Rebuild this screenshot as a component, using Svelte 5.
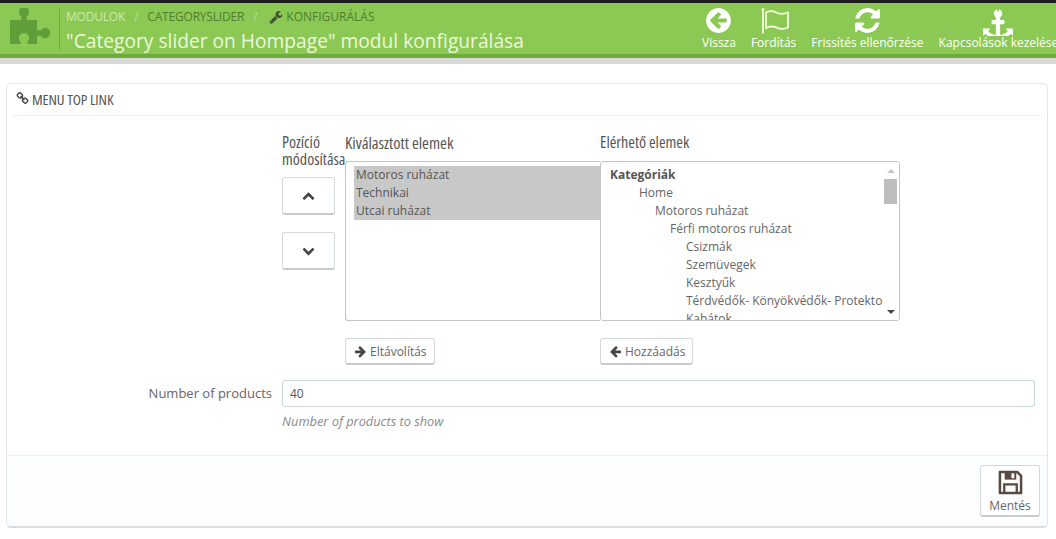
<script>
  const actions = [
    { label: 'Vissza', kind: 'back' },
    { label: 'Fordítás', kind: 'flag' },
    { label: 'Frissítés ellenőrzése', kind: 'refresh' },
    { label: 'Kapcsolások kezelése', kind: 'anchor' }
  ];
  const paths = {
    back: 'M1408 960v-128q0-26-19-45t-45-19h-502l189-189q19-19 19-45t-19-45l-91-91q-18-18-45-18t-45 18l-362 362-91 91q-18 18-18 45t18 45l91 91 362 362q18 18 45 18t45-18l91-91q18-18 18-45t-18-45l-189-189h502q26 0 45-19t19-45zm256-64q0 209-103 385.5t-279.5 279.5-385.5 103-385.5-103-279.5-279.5-103-385.5 103-385.5 279.5-279.5 385.5-103 385.5 103 279.5 279.5 103 385.5z',
    refresh: 'M1639 1056q0 5-1 7-64 268-268 434.5t-478 166.5q-146 0-282.5-55t-243.5-157l-129 129q-19 19-45 19t-45-19-19-45v-448q0-26 19-45t45-19h448q26 0 45 19t19 45-19 45l-137 137q71 66 161 102t187 36q134 0 250-65t186-179q11-17 53-117 8-23 30-23h192q13 0 22.5 9.5t9.5 22.5zm25-800v448q0 26-19 45t-45 19h-448q-26 0-45-19t-19-45 19-45l138-138q-148-137-349-137-134 0-250 65t-186 179q-11 17-53 117-8 23-30 23h-199q-13 0-22.5-9.5t-9.5-22.5v-7q65-268 270-434.5t480-166.5q146 0 284 55.5t245 156.5l130-129q19-19 45-19t45 19 19 45z',
    anchor: 'M960 256q0-26-19-45t-45-19-45 19-19 45 19 45 45 19 45-19 19-45zm832 1120v352q0 22-20 30-8 2-12 2-12 0-23-9l-93-93q-119 143-318.5 226.5t-429.5 83.5-429.5-83.5-318.5-226.5l-93 93q-9 9-23 9-4 0-12-2-20-8-20-30v-352q0-14 9-23t23-9h352q22 0 30 20 8 19-7 35l-100 100q67 91 189.5 153.5t271.5 82.5v-647h-192q-26 0-45-19t-19-45v-128q0-26 19-45t45-19h192v-163q-58-34-93-92.5t-35-128.5q0-106 75-181t181-75 181 75 75 181q0 70-35 128.5t-93 92.5v163h192q26 0 45 19t19 45v128q0 26-19 45t-45 19h-192v647q149-20 271.5-82.5t189.5-153.5l-100-100q-15-16-7-35 8-20 30-20h352q14 0 23 9t9 23z',
    wrench: 'M448 1472q0-26-19-45t-45-19-45 19-19 45 19 45 45 19 45-19 19-45zm644-420l-682 682q-37 37-90 37-52 0-91-37l-106-108q-38-36-38-90 0-53 38-91l681-681q39 98 114.5 173.5t173.5 114.5zm634-435q0 39-23 106-47 134-164.5 217.5t-258.5 83.5q-185 0-316.5-131.5t-131.5-316.5 131.5-316.5 316.5-131.5q58 0 121.5 16.5t107.5 46.5q16 11 16 28t-16 28l-293 169v224l193 107q5-3 79-48.5t135.5-81 70.5-35.5q15 0 23.5 10t8.5 25z',
    link: 'M1520 1216q0-40-28-68l-208-208q-28-28-68-28-42 0-72 32 3 3 19 18.5t21.5 21.5 15 19 13 25.5 3.5 27.5q0 40-28 68t-68 28q-15 0-27.5-3.5t-25.5-13-19-15-21.5-21.5-18.5-19q-33 31-33 73 0 40 28 68l206 207q27 27 68 27 40 0 68-26l147-146q28-28 28-67zm-703-705q0-40-28-68l-206-207q-28-28-68-28-39 0-68 27l-147 146q-28 28-28 67 0 40 28 68l208 208q27 27 68 27 42 0 72-31-3-3-19-18.5t-21.5-21.5-15-19-13-25.5-3.5-27.5q0-40 28-68t68-28q15 0 27.5 3.5t25.5 13 19 15 21.5 21.5 18.5 19q33-31 33-73zm895 705q0 120-85 203l-147 146q-83 83-203 83-121 0-204-85l-206-207q-83-83-83-203 0-123 88-209l-88-88q-86 88-208 88-120 0-204-84l-208-208q-84-84-84-204t85-203l147-146q83-83 203-83 121 0 204 85l206 207q83 83 83 203 0 123-88 209l88 88q86-88 208-88 120 0 204 84l208 208q84 84 84 204z',
    up: 'M1683 1331l-166 165q-19 19-45 19t-45-19l-531-531-531 531q-19 19-45 19t-45-19l-166-165q-19-19-19-45.5t19-45.5l742-741q19-19 45-19t45 19l742 741q19 19 19 45.5t-19 45.5z',
    down: 'M1683 808l-742 741q-19 19-45 19t-45-19l-742-741q-19-19-19-45.5t19-45.5l166-165q19-19 45-19t45 19l531 531 531-531q19-19 45-19t45 19l166 165q19 19 19 45.5t-19 45.5z',
    right: 'M1600 960q0 54-37 91l-651 651q-39 37-91 37-51 0-90-37l-75-75q-38-38-38-91t38-91l293-293h-704q-52 0-84.5-37.5t-32.5-90.5v-128q0-53 32.5-90.5t84.5-37.5h704l-293-294q-38-36-38-90t38-90l75-75q38-38 90-38 53 0 91 38l651 651q37 35 37 90z',
    left: 'M1664 896v128q0 53-32.5 90.5t-84.5 37.5h-704l293 294q38 36 38 90t-38 90l-75 75q-38 38-91 38-52 0-90-38l-651-652q-37-37-37-90 0-52 37-91l651-650q38-38 90-38 52 0 90 38l75 74q38 38 38 91t-38 91l-293 293h704q52 0 84.5 37.5t32.5 90.5z'
  };
  const selected = ['Motoros ruházat', 'Technikai', 'Utcai ruházat'];
  const available = [
    { t: 'Kategóriák', i: 0, b: true },
    { t: 'Home', i: 29 },
    { t: 'Motoros ruházat', i: 45 },
    { t: 'Férfi motoros ruházat', i: 60 },
    { t: 'Csizmák', i: 76 },
    { t: 'Szemüvegek', i: 76 },
    { t: 'Kesztyűk', i: 76 },
    { t: 'Térdvédők- Könyökvédők- Protektorok', i: 76 },
    { t: 'Kabátok', i: 76 }
  ];
</script>

{#snippet fa(name, cls)}
  <svg class={cls} viewBox="0 0 1792 1792" aria-hidden="true"><path d={paths[name]} fill="currentColor" /></svg>
{/snippet}

<div class="page">
  <header class="head">
    <svg class="puzzle" viewBox="0 0 41 37" aria-hidden="true">
      <path fill="#5f9e38" d="M0 12H11L11.500 8.500A5.200 5.200 0 1 1 16.500 8.500L17 12H27V22L30.500 22.500A5.200 5.200 0 1 1 30.500 27.500L27 28V36H18C17 36 17 34 18 33A5 5 0 1 0 10 33C11 34 11 36 10 36H0Z" />
    </svg>
    <div class="titles">
      <div class="crumbs">
        <span class="first">Modulok</span><span class="sep">/</span><span>CategorySlider</span><span class="sep">/</span>
        {@render fa('wrench', 'wrench')}<span class="last">Konfigurálás</span>
      </div>
      <h1>"Category slider on Hompage" modul konfigurálása</h1>
    </div>
    <nav class="actions">
      {#each actions as a}
        <div class="action">
          {#if a.kind === 'flag'}
            <svg class="act-icon flag" viewBox="0 0 29 28" aria-hidden="true">
              <circle cx="2" cy="3" r="1.600" fill="#f7f9e2" />
              <path d="M2 3v24" stroke="#f7f9e2" stroke-width="1.800" fill="none" />
              <path d="M5 6c5-2.500 8-1 11.500.5 3.500 1.300 7 1 10.500-.5v15c-4 1.800-7.500 1.800-11 .2-3.500-1.500-7-2-11 .3z" stroke="#f7f9e2" stroke-width="1.800" fill="none" />
            </svg>
          {:else}
            {@render fa(a.kind, a.kind === 'anchor' ? 'act-icon anchor' : 'act-icon')}
          {/if}
          <span>{a.label}</span>
        </div>
      {/each}
    </nav>
  </header>
  <div class="strip"></div>

  <section class="panel">
    <div class="panel-head">{@render fa('link', 'link')}<span>Menu Top Link</span></div>
    <div class="body">
      <div class="picker">
        <div class="move">
          <div class="cond move-label">Pozíció módosítása</div>
          <button class="btn square">{@render fa('up', 'chev')}</button>
          <button class="btn square">{@render fa('down', 'chev')}</button>
        </div>
        <div class="col sel">
          <div class="cond col-label">Kiválasztott elemek</div>
          <div class="box sel-box">
            <ul class="opts">
              {#each selected as s}<li>{s}</li>{/each}
            </ul>
          </div>
          <button class="btn small">{@render fa('right', 'arrow')}Eltávolítás</button>
        </div>
        <div class="col avail">
          <div class="cond col-label avail-label">Elérhető elemek</div>
          <div class="box avail-box">
            <ul class="list">
              {#each available as o}
                <li class:b={o.b} style="padding-left: {o.i}px">{o.t}</li>
              {/each}
            </ul>
            <div class="scroll">
              <span class="tri up"></span>
              <span class="thumb"></span>
              <span class="tri dn"></span>
            </div>
          </div>
          <button class="btn small">{@render fa('left', 'arrow')}Hozzáadás</button>
        </div>
      </div>

      <div class="row">
        <label class="row-label" for="num">Number of products</label>
        <div class="row-field">
          <input id="num" type="text" value="40" />
          <p class="help">Number of products to show</p>
        </div>
      </div>
    </div>
    <footer class="foot">
      <button class="btn save">
        <svg class="disk" viewBox="0 0 26 26" aria-hidden="true">
          <path d="M2 2h18l4 4v18H2z" fill="none" stroke="#5a4a3f" stroke-width="2.600" stroke-linejoin="round" />
          <path d="M7 2h12v8H7z" fill="#5a4a3f" />
          <path d="M14 3.500h3v5h-3z" fill="#fff" />
          <path d="M6.500 24v-9h13v9" fill="none" stroke="#5a4a3f" stroke-width="2.400" />
        </svg>
        <span>Mentés</span>
      </button>
    </footer>
  </section>
</div>

<style>
  :global(body) {
    margin: 0;
    background: #fff;
    overflow: hidden;
  }
  .page {
    width: 1056px;
    height: 539px;
    overflow: hidden;
    font-family: "Open Sans", sans-serif;
    font-size: 12px;
    color: #666;
  }
  .head {
    display: flex;
    height: 51px;
    background: #8bc954;
    border-top: 3px solid #1c1c1c;
    border-bottom: 4px solid #6eac3c;
    box-sizing: content-box;
    overflow: hidden;
    position: relative;
  }
  .puzzle {
    width: 41px;
    height: 37px;
    margin: 5px 0 0 10px;
    flex: none;
  }
  .titles {
    margin: 6px 0 0 8px;
    padding-left: 6px;
    border-left: 1px solid #6eac3c;
    height: 42px;
    flex: none;
    width: 600px;
  }
  .crumbs {
    display: flex;
    align-items: center;
    height: 16px;
    text-transform: uppercase;
    color: #4f7f2c;
    font-size: 12px;
    line-height: 16px;
    letter-spacing: -0.2px;
  }
  .first { color: #cdeab0; }
  .last { letter-spacing: 0; }
  .sep { margin: 0 9px; color: #b9dd99; }
  .wrench { width: 14px; height: 14px; margin: 0 3px; color: #3f4f2e; }
  h1 {
    margin: 3px 0 0;
    font-size: 19.2px;
    line-height: 26px;
    font-weight: 400;
    color: #ecf8df;
    white-space: nowrap;
  }
  .actions {
    position: absolute;
    left: 702px;
    top: 0;
    display: flex;
    gap: 15px;
    width: 354px;
    overflow: hidden;
    white-space: nowrap;
  }
  .action {
    display: flex;
    flex-direction: column;
    align-items: center;
    color: #fff;
    font-size: 12px;
    font-weight: 400;
    line-height: 15px;
    flex: none;
  }
  .act-icon {
    width: 29px;
    height: 29px;
    margin: 3px 0 0;
    color: #fff;
  }
  .flag { margin-left: 3px; }
  .anchor { width: 30px; height: 30px; margin: 3px 0 -1px; }
  .strip {
    height: 6px;
    background: #d9d9d9;
  }
  .panel {
    margin: 19px 8px 0 6px;
    height: 445px;
    box-sizing: border-box;
    background: #fff;
    border: 1px solid #e6e6e6;
    border-bottom: 2px solid #dcdcdc;
    border-radius: 5px;
    display: flex;
    flex-direction: column;
  }
  .panel-head {
    margin: 0 5px;
    height: 32px;
    box-sizing: border-box;
    border-bottom: 1px solid #eee;
    display: flex;
    align-items: center;
    gap: 3px;
    padding: 0 0 2px 4px;
    text-transform: uppercase;
    font-size: 15px;
    color: #555;
    font-stretch: 75%;
    letter-spacing: -0.1px;
  }
  .link { width: 13px; height: 13px; color: #444; }
  .body { flex: 1; padding: 18px 0 0; }
  .picker {
    display: flex;
    margin-left: 275px;
  }
  .cond {
    font-size: 16px;
    line-height: 17px;
    color: #555;
    font-stretch: 75%;
  }
  .move { width: 63px; flex: none; }
  .move-label { width: 63px; height: 43px; }
  .btn {
    display: flex;
    align-items: center;
    justify-content: center;
    box-sizing: border-box;
    background: #fff;
    border: 1px solid #d3d8db;
    border-bottom: 2px solid #c7cbce;
    border-radius: 3px;
    color: #666;
    font-family: inherit;
    font-size: 12px;
    padding: 0;
  }
  .square { width: 53px; height: 38px; margin-bottom: 17px; }
  .chev { width: 13px; height: 13px; color: #444; }
  .col-label { height: 27px; font-size: 16.500px; }
  .avail-label { font-size: 16px; }
  .sel { width: 255px; flex: none; }
  .avail { width: 300px; flex: none; }
  .box {
    height: 160px;
    box-sizing: border-box;
    border: 1px solid #c4c4c4;
    overflow: hidden;
    background: #fff;
  }
  .sel-box { border-right: 0; border-radius: 3px 0 0 3px; padding: 4px 0 0 8px; }
  .avail-box { border-radius: 3px; display: flex; }
  ul { list-style: none; margin: 0; padding: 0; }
  .opts li {
    background: #c8c8c8;
    line-height: 18px;
    height: 18px;
    padding-left: 2px;
    color: #555;
  }
  .list {
    flex: 1;
    min-width: 0;
    padding: 4px 0 0 9px;
    overflow: hidden;
  }
  .list li { line-height: 18px; height: 18px; white-space: nowrap; color: #666; }
  .list li.b { font-weight: 700; color: #555; }
  .scroll {
    width: 16px;
    flex: none;
    display: flex;
    flex-direction: column;
    align-items: center;
    background: #fff;
  }
  .thumb { width: 13px; height: 25px; background: #bdbdbd; margin-top: 6px; margin-right: 1px; }
  .tri { width: 0; height: 0; border-left: 4px solid transparent; border-right: 4px solid transparent; }
  .tri.up { border-bottom: 4px solid #c4c4c4; margin-top: 7px; }
  .tri.dn { border-top: 4px solid #444; margin-top: auto; margin-bottom: 6px; }
  .small {
    margin-top: 17px;
    height: 27px;
    padding: 0 7px 0 8px;
    gap: 3px;
  }
  .arrow { width: 13px; height: 13px; color: #444; }
  .row {
    display: flex;
    margin-top: 15px;
  }
  .row-label {
    width: 265px;
    text-align: right;
    font-size: 13px;
    line-height: 27px;
    color: #666;
    flex: none;
  }
  .row-field { margin-left: 10px; width: 753px; flex: none; }
  input {
    display: block;
    width: 100%;
    height: 27px;
    box-sizing: border-box;
    border: 1px solid #c7d6db;
    border-radius: 3px;
    padding: 0 7px;
    font: 12px "Open Sans", sans-serif;
    color: #555;
  }
  .help {
    margin: 6px 0 0;
    font-style: italic;
    color: #8a8a8a;
    font-size: 12.800px;
    line-height: 16px;
  }
  .foot {
    height: 71px;
    flex: none;
    box-sizing: border-box;
    border-top: 1px solid #eef0f2;
    background: #fcfdfe;
    border-radius: 0 0 5px 5px;
    display: flex;
    justify-content: flex-end;
    padding: 9px 7px 0 0;
  }
  .save {
    width: 60px;
    height: 52px;
    flex-direction: column;
    gap: 2px;
    padding-top: 2px;
  }
  .disk { width: 25px; height: 25px; }
</style>
